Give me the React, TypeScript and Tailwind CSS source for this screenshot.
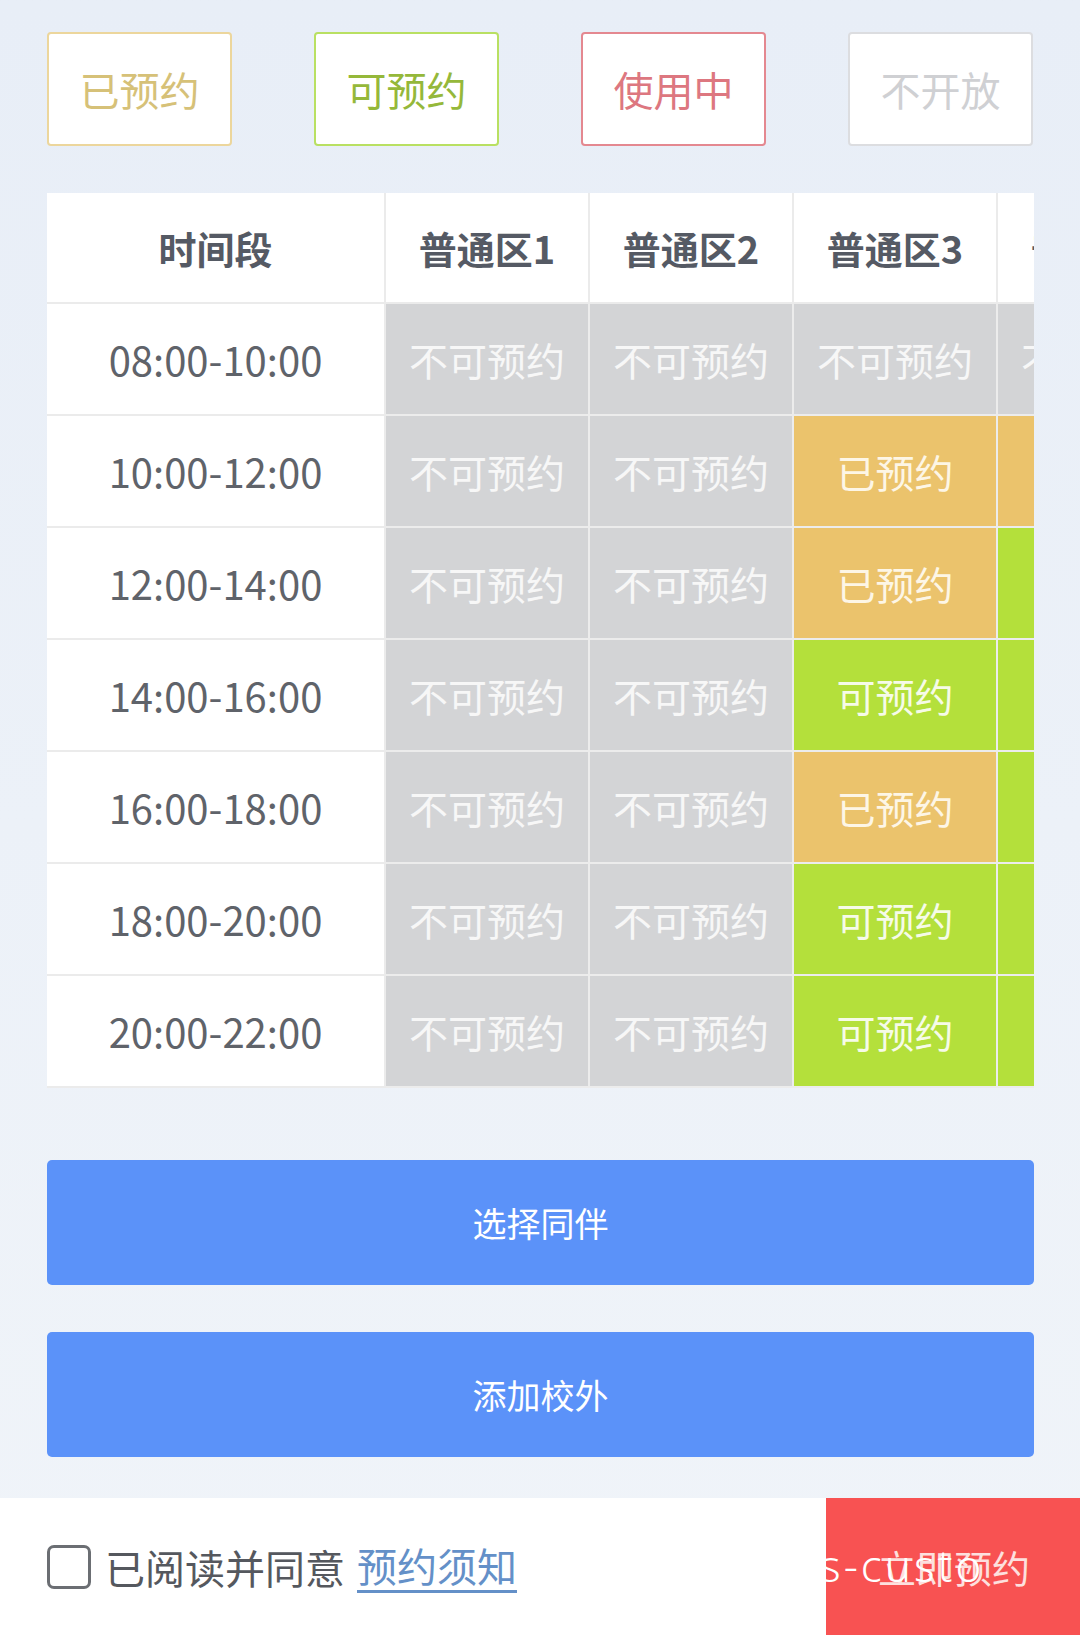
import React from 'react';

type Status = 'gray' | 'booked' | 'free';

const font = { fontFamily: '"Noto Sans CJK SC", "Noto Sans", sans-serif' };

const times = [
  '08:00-10:00',
  '10:00-12:00',
  '12:00-14:00',
  '14:00-16:00',
  '16:00-18:00',
  '18:00-20:00',
  '20:00-22:00',
];

// columns: 普通区1..4, per row
const grid: Status[][] = [
  ['gray', 'gray', 'gray', 'gray'],
  ['gray', 'gray', 'booked', 'booked'],
  ['gray', 'gray', 'booked', 'free'],
  ['gray', 'gray', 'free', 'free'],
  ['gray', 'gray', 'booked', 'free'],
  ['gray', 'gray', 'free', 'free'],
  ['gray', 'gray', 'free', 'free'],
];

const label: Record<Status, string> = {
  gray: '不可预约',
  booked: '已预约',
  free: '可预约',
};

const cellClass: Record<Status, string> = {
  gray: 'bg-[#d3d4d6] text-[#f7f7f7]',
  booked: 'bg-[#ebc36c] text-[#fdf6e6]',
  free: 'bg-[#b4e03b] text-[#f6fbe8]',
};

function Legend() {
  return (
    <div className="flex justify-between">
      <div className="w-[185px] h-[114px] flex items-center justify-center rounded-[4px] border-2 border-[#ecd69c] bg-white text-[40px] text-[#d6c178]">
        已预约
      </div>
      <div className="w-[185px] h-[114px] flex items-center justify-center rounded-[4px] border-2 border-[#b9e062] bg-white text-[40px] text-[#95b83a]">
        可预约
      </div>
      <div className="w-[185px] h-[114px] flex items-center justify-center rounded-[4px] border-2 border-[#e48890] bg-white text-[40px] text-[#dd7780]">
        使用中
      </div>
      <div className="w-[185px] h-[114px] flex items-center justify-center rounded-[4px] border-2 border-[#dcdde0] bg-white text-[40px] text-[#cfd0d3]">
        不开放
      </div>
    </div>
  );
}

function Table() {
  const zones = ['普通区1', '普通区2', '普通区3', '普通区4'];
  return (
    <div className="mt-[47px] w-[987px] overflow-hidden">
      <div className="w-[1159px]">
        <div className="flex h-[111px] bg-white">
          <div className="w-[339px] shrink-0 border-r-2 border-b-2 border-[#ebebeb] flex items-center justify-center text-[38px] font-bold text-[#555a64]">
            时间段
          </div>
          {zones.map((z) => (
            <div
              key={z}
              className="w-[204px] shrink-0 border-r-2 border-b-2 border-[#ebebeb] flex items-center justify-center text-[38px] font-bold text-[#555a64]"
            >
              {z}
            </div>
          ))}
        </div>
        {times.map((t, i) => (
          <div key={t} className="flex h-[112px]">
            <div className="w-[339px] shrink-0 bg-white border-r-2 border-b-2 border-[#ebebeb] flex items-center justify-center text-[40px] text-[#5f636a]">
              {t}
            </div>
            {grid[i].map((s, j) => (
              <div
                key={j}
                className={`w-[204px] shrink-0 border-r-2 border-b-2 border-[#ececec] flex items-center justify-center text-[39px] ${cellClass[s]}`}
              >
                {label[s]}
              </div>
            ))}
          </div>
        ))}
      </div>
    </div>
  );
}

export default function App() {
  return (
    <div
      className="w-[1080px] h-[1635px] flex flex-col bg-gradient-to-b from-[#e8eef7] to-[#f0f4f9] overflow-hidden"
      style={font}
    >
      <div className="flex-1 px-[47px] pt-[32px]">
        <Legend />
        <Table />
        <button className="mt-[72px] w-[987px] h-[125px] rounded-[5px] bg-[#5b92f9] text-white text-[34px] flex items-center justify-center">
          选择同伴
        </button>
        <button className="mt-[47px] w-[987px] h-[125px] rounded-[5px] bg-[#5b92f9] text-white text-[34px] flex items-center justify-center">
          添加校外
        </button>
      </div>
      <div className="relative h-[137px] bg-white flex">
        <div className="flex-1 flex items-center pl-[47px]">
          <div className="w-[44px] h-[44px] rounded-[7px] border-[3px] border-[#6b6e73]" />
          <span className="ml-[14px] text-[40px] text-[#55585e]">已阅读并同意</span>
          <span className="ml-[12px] text-[40px] text-[#6490c8] border-b-[3px] border-[#6490c8] leading-[50px]">
            预约须知
          </span>
        </div>
        <div className="w-[254px] bg-[#f85252] flex items-center justify-end pr-[50px] text-[38px] text-[#fde0de]">
          立即预约
        </div>
        <span
          className="absolute left-[820px] top-[39px] w-[162px] overflow-hidden whitespace-nowrap text-[44px] font-light tracking-[3px] text-white leading-[56px]"
          style={{ fontFamily: '"Noto Sans", sans-serif' }}
        >
          s-custom
        </span>
      </div>
    </div>
  );
}
